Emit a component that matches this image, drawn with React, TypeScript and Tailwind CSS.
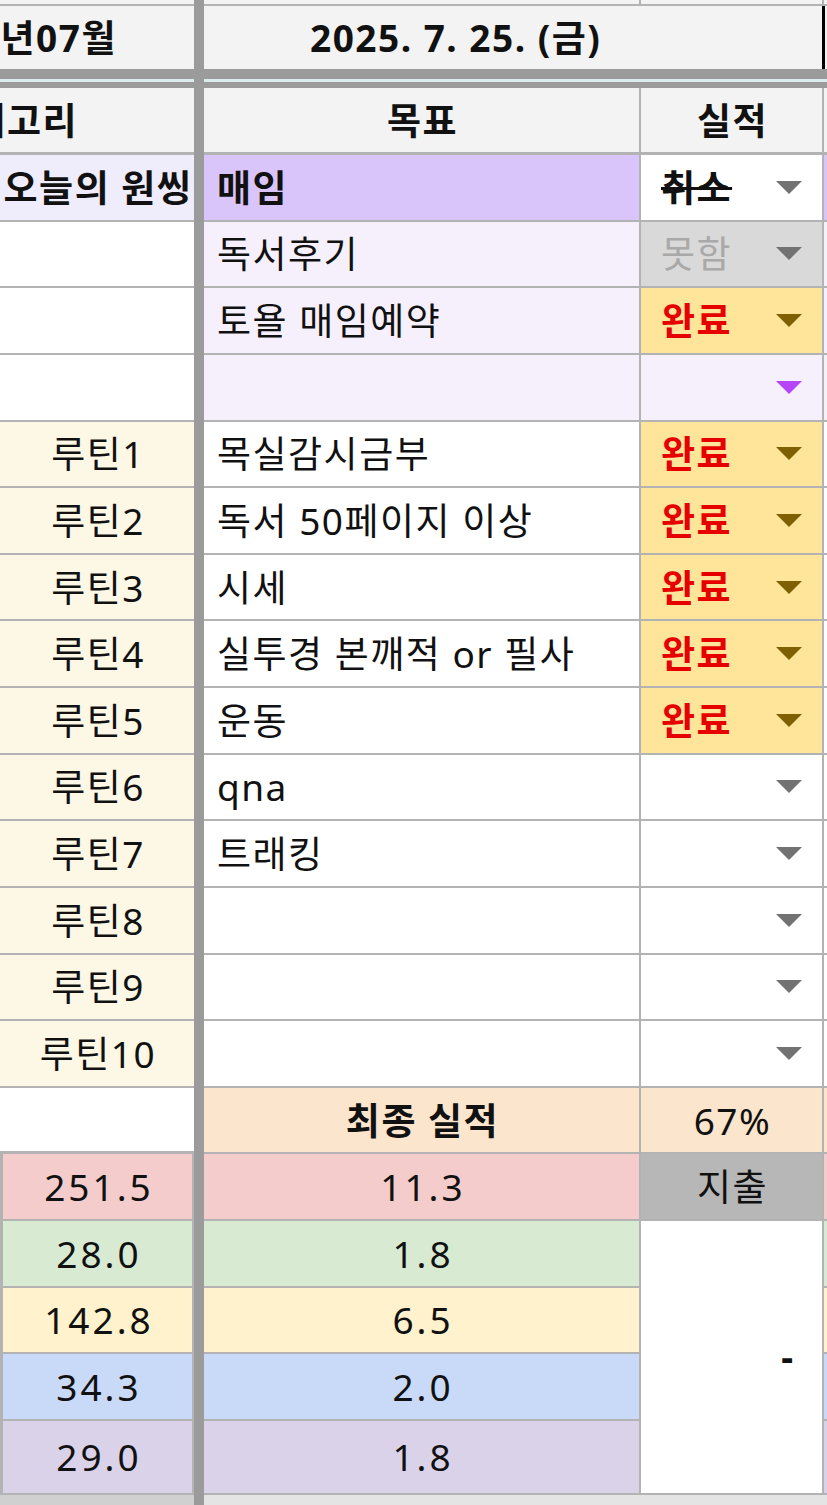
import React from "react";

const BORDER = "border-[#b3b3b3]";

function Arrow({ color }: { color: string }) {
  return (
    <svg width="26" height="13" viewBox="0 0 26 13" className="shrink-0">
      <polygon points="0,0 26,0 13,13" fill={color} />
    </svg>
  );
}

type Row = {
  left: string;
  leftBg: string;
  leftBold?: boolean;
  mid: string;
  midBg: string;
  midBold?: boolean;
  right: string;
  rightBg: string;
  rightText: string;
  arrow: string;
  sliver: string;
};

const GRAY_ARROW = "#727272";
const GOLD_ARROW = "#7f6000";

const rows: Row[] = [
  { left: "오늘의 원씽", leftBg: "bg-[#efedfc]", leftBold: true, mid: "매임", midBg: "bg-[#dac5fb]", midBold: true, right: "취소", rightBg: "bg-white", rightText: "font-bold line-through text-[#111]", arrow: GRAY_ARROW, sliver: "bg-[#dac5fb]" },
  { left: "", leftBg: "bg-white", mid: "독서후기", midBg: "bg-[#f6f0fd]", right: "못함", rightBg: "bg-[#d9d9d9]", rightText: "text-[#a9a9a9]", arrow: GRAY_ARROW, sliver: "bg-[#f6f0fd]" },
  { left: "", leftBg: "bg-white", mid: "토욜 매임예약", midBg: "bg-[#f6f0fd]", right: "완료", rightBg: "bg-[#ffe599]", rightText: "font-bold text-[#e60000]", arrow: GOLD_ARROW, sliver: "bg-[#f6f0fd]" },
  { left: "", leftBg: "bg-white", mid: "", midBg: "bg-[#f6f0fd]", right: "", rightBg: "bg-[#f6f0fd]", rightText: "", arrow: "#b545f7", sliver: "bg-[#f6f0fd]" },
  { left: "루틴1", leftBg: "bg-[#fdf8e6]", mid: "목실감시금부", midBg: "bg-white", right: "완료", rightBg: "bg-[#ffe599]", rightText: "font-bold text-[#e60000]", arrow: GOLD_ARROW, sliver: "bg-white" },
  { left: "루틴2", leftBg: "bg-[#fdf8e6]", mid: "독서 50페이지 이상", midBg: "bg-white", right: "완료", rightBg: "bg-[#ffe599]", rightText: "font-bold text-[#e60000]", arrow: GOLD_ARROW, sliver: "bg-white" },
  { left: "루틴3", leftBg: "bg-[#fdf8e6]", mid: "시세", midBg: "bg-white", right: "완료", rightBg: "bg-[#ffe599]", rightText: "font-bold text-[#e60000]", arrow: GOLD_ARROW, sliver: "bg-white" },
  { left: "루틴4", leftBg: "bg-[#fdf8e6]", mid: "실투경 본깨적 or 필사", midBg: "bg-white", right: "완료", rightBg: "bg-[#ffe599]", rightText: "font-bold text-[#e60000]", arrow: GOLD_ARROW, sliver: "bg-white" },
  { left: "루틴5", leftBg: "bg-[#fdf8e6]", mid: "운동", midBg: "bg-white", right: "완료", rightBg: "bg-[#ffe599]", rightText: "font-bold text-[#e60000]", arrow: GOLD_ARROW, sliver: "bg-white" },
  { left: "루틴6", leftBg: "bg-[#fdf8e6]", mid: "qna", midBg: "bg-white", right: "", rightBg: "bg-white", rightText: "", arrow: GRAY_ARROW, sliver: "bg-white" },
  { left: "루틴7", leftBg: "bg-[#fdf8e6]", mid: "트래킹", midBg: "bg-white", right: "", rightBg: "bg-white", rightText: "", arrow: GRAY_ARROW, sliver: "bg-white" },
  { left: "루틴8", leftBg: "bg-[#fdf8e6]", mid: "", midBg: "bg-white", right: "", rightBg: "bg-white", rightText: "", arrow: GRAY_ARROW, sliver: "bg-white" },
  { left: "루틴9", leftBg: "bg-[#fdf8e6]", mid: "", midBg: "bg-white", right: "", rightBg: "bg-white", rightText: "", arrow: GRAY_ARROW, sliver: "bg-white" },
  { left: "루틴10", leftBg: "bg-[#fdf8e6]", mid: "", midBg: "bg-white", right: "", rightBg: "bg-white", rightText: "", arrow: GRAY_ARROW, sliver: "bg-white" },
];

const money = [
  { a: "251.5", b: "11.3", bg: "bg-[#f4cccc]", h: "h-[66.63px]" },
  { a: "28.0", b: "1.8", bg: "bg-[#d9ead3]", h: "h-[66.63px]" },
  { a: "142.8", b: "6.5", bg: "bg-[#fff2cc]", h: "h-[66.63px]" },
  { a: "34.3", b: "2.0", bg: "bg-[#c9daf8]", h: "h-[66.63px]" },
  { a: "29.0", b: "1.8", bg: "bg-[#d9d2e9]", h: "h-[74px]" },
];

function Divider() {
  return <div className="w-[10px] shrink-0 bg-[#9b9b9b]" />;
}
function VLine() {
  return <div className="w-[2px] shrink-0 bg-[#b3b3b3]" />;
}

export default function App() {
  return (
    <div className="w-[827px] h-[1505px] overflow-hidden bg-[#ebebeb] text-[#111] text-[37px] tracking-[1.5px] leading-none font-['Noto_Sans','Noto_Sans_CJK_KR',sans-serif]">
      {/* top sliver */}
      <div className="flex h-[6px]">
        <div className={`w-[194px] bg-[#f3f3f3] border-b-2 ${BORDER}`} />
        <Divider />
        <div className={`w-[435px] bg-[#f3f3f3] border-b-2 ${BORDER}`} />
        <VLine />
        <div className={`w-[181px] bg-[#f3f3f3] border-b-2 ${BORDER}`} />
        <VLine />
        <div className={`w-[3px] bg-[#f3f3f3] border-b-2 ${BORDER}`} />
      </div>

      {/* date row */}
      <div className="flex h-[63px]">
        <div className="w-[194px] shrink-0 bg-[#f3f3f3] overflow-hidden flex items-center justify-end pr-[77px] font-bold">
          <span className="whitespace-nowrap">2025년07월</span>
        </div>
        <Divider />
        <div className="w-[618px] shrink-0 bg-[#f3f3f3] flex items-center pl-[106px] font-bold whitespace-nowrap">
          2025. 7. 25. (금)
        </div>
        <div className="w-[3px] shrink-0 bg-black" />
        <div className="w-[2px] shrink-0 bg-[#f3f3f3]" />
      </div>

      {/* thick band */}
      <div className="flex h-[19px] bg-[#9b9b9b]">
        <div className="w-[194px] flex flex-col">
          <div className="h-[10px]" />
          <div className="h-[3px] bg-[#dcecec]" />
        </div>
        <div className="w-[10px]" />
        <div className="w-[623px] flex flex-col">
          <div className="h-[10px]" />
          <div className="h-[3px] bg-[#dcecec]" />
        </div>
      </div>

      {/* header row */}
      <div className="flex h-[67px] font-bold">
        <div className={`w-[194px] shrink-0 bg-[#f3f3f3] overflow-hidden flex items-center justify-end pr-[116px] border-b-[3px] ${BORDER}`}>
          <span className="whitespace-nowrap">카테고리</span>
        </div>
        <Divider />
        <div className={`w-[435px] shrink-0 bg-[#f3f3f3] flex items-center justify-center pl-[2px] border-b-[3px] ${BORDER}`}>목표</div>
        <VLine />
        <div className={`w-[181px] shrink-0 bg-[#f3f3f3] flex items-center justify-center pl-[2px] border-b-[3px] ${BORDER}`}>실적</div>
        <VLine />
        <div className={`w-[3px] shrink-0 bg-[#f3f3f3] border-b-[3px] ${BORDER}`} />
      </div>

      {/* data rows */}
      {rows.map((r, i) => (
        <div key={i} className="flex h-[66.63px]">
          <div className={`w-[194px] shrink-0 ${r.leftBg} border-b-2 ${BORDER} flex items-center justify-center pl-[2px] whitespace-nowrap overflow-hidden ${r.leftBold ? "font-bold" : ""}`}>
            {r.left}
          </div>
          <Divider />
          <div className={`w-[435px] shrink-0 ${r.midBg} border-b-2 ${BORDER} flex items-center pl-[13px] whitespace-nowrap ${r.midBold ? "font-bold" : ""}`}>
            {r.mid}
          </div>
          <VLine />
          <div className={`w-[181px] shrink-0 ${r.rightBg} border-b-2 ${BORDER} flex items-center justify-between pl-[20px] pr-[20px]`}>
            <span className={`whitespace-nowrap ${r.rightText}`}>{r.right}</span>
            <Arrow color={r.arrow} />
          </div>
          <VLine />
          <div className={`w-[3px] shrink-0 ${r.sliver} border-b-2 ${BORDER}`} />
        </div>
      ))}

      {/* final row */}
      <div className="flex h-[66.63px]">
        <div className="w-[194px] shrink-0 bg-white border-b-[3px] border-[#b3b3b3]" />
        <Divider />
        <div className={`w-[435px] shrink-0 bg-[#fce5cd] border-b-2 ${BORDER} flex items-center justify-center pl-[2px] font-bold`}>최종 실적</div>
        <VLine />
        <div className={`w-[181px] shrink-0 bg-[#fce5cd] border-b-2 ${BORDER} flex items-center justify-center pl-[2px]`}>67%</div>
        <VLine />
        <div className={`w-[3px] shrink-0 bg-[#fce5cd] border-b-2 ${BORDER}`} />
      </div>

      {/* money block */}
      <div className="flex tracking-[3px]">
        <div className="w-[194px] shrink-0 flex flex-col bg-[#b3b3b3] pl-[3px] pr-[2px]">
          {money.map((m, i) => (
            <div key={i} className={`${m.h} ${m.bg} border-b-2 ${BORDER} flex items-center justify-center pl-[3px]`}>
              {m.a}
            </div>
          ))}
        </div>
        <Divider />
        <div className="w-[435px] shrink-0 flex flex-col">
          {money.map((m, i) => (
            <div key={i} className={`${m.h} ${m.bg} border-b-2 ${BORDER} flex items-center justify-center pl-[3px]`}>
              {m.b}
            </div>
          ))}
        </div>
        <VLine />
        <div className="w-[181px] shrink-0 flex flex-col">
          <div className={`h-[66.63px] bg-[#b7b7b7] border-b-2 ${BORDER} flex items-center justify-center pl-[2px] tracking-[1.5px]`}>지출</div>
          <div className={`flex-1 bg-white border-b-2 ${BORDER} flex items-center justify-end pr-[29px] font-bold tracking-normal`}>-</div>
        </div>
        <VLine />
        <div className="w-[3px] shrink-0 flex flex-col">
          {money.map((m, i) => (
            <div key={i} className={`${m.h} ${m.bg} border-b-2 ${BORDER}`} />
          ))}
        </div>
      </div>

      {/* bottom */}
      <div className="flex h-[10px]">
        <div className="w-[194px] bg-[#d0d0d0]" />
        <Divider />
        <div className="flex-1 bg-[#e4e4e4]" />
      </div>
    </div>
  );
}
